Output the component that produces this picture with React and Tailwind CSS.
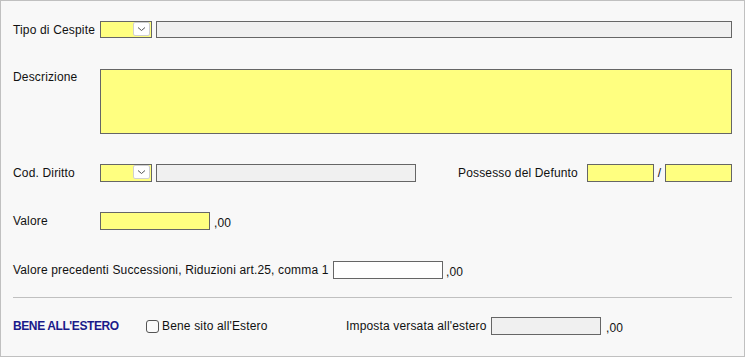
import React from "react";

function Select({ h }) {
  return (
    <div className={"relative w-[52px] border border-[#666666] bg-[#ffff80] shrink-0 " + (h === 18 ? "h-[18px]" : "h-[17px]")}>
      <div className="absolute right-[1px] top-[0px] w-[17px] h-[14px] bg-white border border-[#d0d0d0] rounded-[2px] flex items-center justify-center">
        <svg width="9" height="6" viewBox="0 0 9 6">
          <path d="M1 1.5 L4.5 4.5 L8 1.5" fill="none" stroke="#555" strokeWidth="1" />
        </svg>
      </div>
    </div>
  );
}

export default function App() {
  return (
    <div
      className="w-[745px] h-[357px] border border-[#c0c0c0] bg-[#f8f8f8] text-[12px] text-[#111] leading-[14px] tracking-[0.16px] pl-[12px] pt-[20px]"
      style={{ fontFamily: '"Liberation Sans", Arial, sans-serif' }}
    >
      {/* Row 1 */}
      <div className="flex items-center h-[17px]">
        <div className="w-[87px] shrink-0">Tipo di Cespite</div>
        <Select h={17} />
        <div className="ml-[4px] w-[576px] h-[17px] border border-[#666666] bg-[#f0f0f0]" />
      </div>

      {/* Descrizione */}
      <div className="flex mt-[31px]">
        <div className="w-[87px] shrink-0 pt-[1px]">Descrizione</div>
        <div className="w-[632px] h-[65px] border border-[#666666] bg-[#ffff80]" />
      </div>

      {/* Cod. Diritto */}
      <div className="flex items-center h-[18px] mt-[30px]">
        <div className="w-[87px] shrink-0">Cod. Diritto</div>
        <Select h={18} />
        <div className="ml-[4px] w-[260px] h-[18px] border border-[#666666] bg-[#f0f0f0]" />
        <div className="ml-[42px] w-[129px] shrink-0">Possesso del Defunto</div>
        <div className="w-[67px] h-[18px] border border-[#666666] bg-[#ffff80]" />
        <div className="w-[11px] text-center">/</div>
        <div className="w-[67px] h-[18px] border border-[#666666] bg-[#ffff80]" />
      </div>

      {/* Valore */}
      <div className="flex items-center h-[18px] mt-[30px]">
        <div className="w-[87px] shrink-0">Valore</div>
        <div className="w-[110px] h-[18px] border border-[#666666] bg-[#ffff80]" />
        <div className="ml-[4px] pt-[3px]">,00</div>
      </div>

      {/* Valore precedenti */}
      <div className="flex items-center h-[18px] mt-[31px]">
        <div className="w-[320px] shrink-0">Valore precedenti Successioni, Riduzioni art.25, comma 1</div>
        <div className="w-[110px] h-[18px] border border-[#666666] bg-white" />
        <div className="ml-[3px] pt-[3px]">,00</div>
      </div>

      <div className="mt-[18px] w-[719px] h-px bg-[#c0c0c0]" />

      {/* Bene all'estero */}
      <div className="flex items-center h-[18px] mt-[19px]">
        <div className="w-[133px] shrink-0 font-bold text-[#1a1a8a] tracking-[-0.4px]">BENE ALL'ESTERO</div>
        <div className="w-[13px] h-[13px] border border-[#555] rounded-[3px] bg-[#fbfbfb] shrink-0" />
        <div className="w-[187px] shrink-0 pl-[3px]">Bene sito all'Estero</div>
        <div className="w-[145px] shrink-0">Imposta versata all'estero</div>
        <div className="w-[110px] h-[18px] border border-[#666666] bg-[#f0f0f0]" />
        <div className="ml-[5px] pt-[3px]">,00</div>
      </div>
    </div>
  );
}
